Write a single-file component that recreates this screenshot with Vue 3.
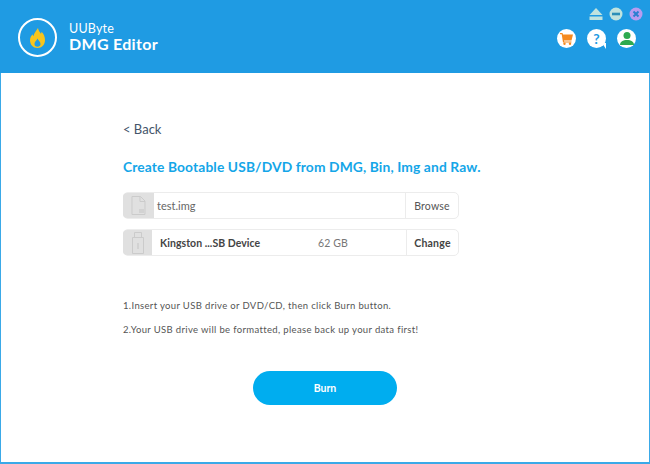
<script setup>
const tips = [
  "1.Insert your USB drive or DVD/CD, then click Burn button.",
  "2.Your USB drive will be formatted, please back up your data first!",
];
</script>

<template>
  <div class="app">
    <header class="header">
      <div class="brand">
        <div class="logo">
          <svg width="15" height="20" viewBox="0 0 15 20">
            <path
              fill="#f8c51c"
              fill-rule="evenodd"
              d="M8 0c.4 2.800 1.800 4.200 3 5.700.3-.6.5-1.200.5-1.900C13.800 6 15 9 15 12.300 15 16.800 11.800 20 7.500 20S0 16.800 0 12.300C0 9.500 1.300 7.800 2.600 6.200c.1.800.4 1.400.8 2C4 5 6.300 3 8 0zM7.500 10.500c-.5 1.600-3 3.100-3 5.500 0 1.700 1.300 2.800 3 2.800s3-1.100 3-2.800c0-2.400-2.500-3.900-3-5.500z"
            />
          </svg>
        </div>
        <div class="brand-text">
          <div class="brand-small">UUByte</div>
          <div class="brand-big">DMG Editor</div>
        </div>
      </div>
      <div class="controls">
        <div class="win-row">
          <svg width="14" height="14" viewBox="0 0 14 14">
            <path fill="#bfe3df" d="M7 1l6.500 7H.5z" />
            <rect x="0.500" y="9.500" width="13" height="3.500" fill="#bfe3df" />
          </svg>
          <svg width="14" height="14" viewBox="0 0 14 14">
            <circle cx="7" cy="7" r="6.500" fill="#bfe3df" />
            <rect x="3" y="5.700" width="8" height="2.600" fill="#2a8fb8" />
          </svg>
          <svg width="14" height="14" viewBox="0 0 14 14">
            <circle cx="7" cy="7" r="6.500" fill="#b79cf0" />
            <path d="M4.500 4.500l5 5M9.500 4.500l-5 5" stroke="#2a7fd0" stroke-width="2" />
          </svg>
        </div>
        <div class="tool-row">
          <div class="tool">
            <svg width="13" height="12" viewBox="0 0 13 12">
              <path fill="#f58a1f" d="M0 0h2.500l.5 1.500h10L11.500 7.500H4l.2 1H11.500v1H3L1.700 1.200H0z" />
              <circle cx="4.500" cy="10.800" r="1.200" fill="#f58a1f" />
              <circle cx="10" cy="10.800" r="1.200" fill="#f58a1f" />
            </svg>
          </div>
          <div class="tool help">
            <span class="q">?</span>
            <i class="tail"></i>
          </div>
          <div class="tool">
            <svg width="14" height="13" viewBox="0 0 14 13">
              <circle cx="7" cy="3.500" r="3.500" fill="#2eaa4f" />
              <path fill="#2eaa4f" d="M0 13c0-3.500 3-5 7-5s7 1.500 7 5z" />
            </svg>
          </div>
        </div>
      </div>
    </header>

    <main class="main">
      <div class="back">&lt; Back</div>
      <h1 class="title">Create Bootable USB/DVD from DMG, Bin, Img and Raw.</h1>

      <div class="field first">
        <div class="thumb wide">
          <svg width="15" height="19" viewBox="0 0 15 19">
            <path fill="none" stroke="#cbcbcb" d="M1 .5h8.500L14 5v13.500H1z" />
            <path fill="none" stroke="#cbcbcb" d="M9 .5V5.500h5" />
            <path d="M8 14h5M8 16h5" stroke="#c4c4c4" />
          </svg>
        </div>
        <div class="file-name">test.img</div>
        <div class="action">Browse</div>
      </div>

      <div class="field">
        <div class="thumb">
          <svg width="12" height="22" viewBox="0 0 12 22">
            <path fill="none" stroke="#cbcbcb" d="M2.500 .5h7v5h-7zM.5 5.500h11v16H.5z" />
            <path d="M6 11v6" stroke="#c4c4c4" />
          </svg>
        </div>
        <div class="device-name">Kingston ...SB Device</div>
        <div class="device-size">62 GB</div>
        <div class="action strong">Change</div>
      </div>

      <div class="tips">
        <p v-for="tip in tips" :key="tip">{{ tip }}</p>
      </div>

      <button class="burn">Burn</button>
    </main>
  </div>
</template>

<style scoped>
* {
  box-sizing: border-box;
}

.app {
  width: 650px;
  height: 464px;
  overflow: hidden;
  background: #fff;
  font-family: Lato, "Open Sans", sans-serif;
  display: flex;
  flex-direction: column;
}

.header {
  height: 73px;
  background: #1f9be3;
  display: flex;
  justify-content: space-between;
  padding: 7px 7px 0 18px;
  flex-shrink: 0;
}

.brand {
  display: flex;
  align-items: flex-start;
  padding-top: 11px;
  gap: 12px;
}

.logo {
  width: 39px;
  height: 39px;
  border: 2.500px solid #fff;
  border-radius: 50%;
  display: flex;
  align-items: center;
  justify-content: center;
}

.brand-text {
  color: #fff;
  padding-top: 4px;
}

.brand-small {
  font-size: 12.500px;
  line-height: 14px;
  letter-spacing: 0.2px;
}

.brand-big {
  font-size: 16px;
  line-height: 16px;
  font-weight: 700;
  letter-spacing: 0.3px;
}

.controls {
  display: flex;
  flex-direction: column;
  align-items: flex-end;
  gap: 8px;
}

.win-row {
  display: flex;
  align-items: center;
  gap: 6px;
}

.tool-row {
  display: flex;
  gap: 11px;
  margin-right: 7px;
}

.tool {
  width: 19px;
  height: 19px;
  border-radius: 50%;
  background: #fff;
  display: flex;
  align-items: center;
  justify-content: center;
  position: relative;
}

.q {
  color: #1f9be3;
  font-weight: 700;
  font-size: 14px;
  line-height: 1;
}

.tail {
  position: absolute;
  right: -1px;
  bottom: 0;
  border-left: 6px solid #fff;
  border-bottom: 4px solid transparent;
  transform: rotate(90deg);
}

.main {
  flex: 1;
  padding: 48px 0 0 122px;
  display: flex;
  flex-direction: column;
  align-items: flex-start;
  border: 1px solid #3aa9e8;
  border-top: 0;
  border-bottom-width: 2px;
}

.back {
  font-size: 13px;
  line-height: 16px;
  color: #44546a;
}

.title {
  margin: 21px 0 0;
  font-size: 13.800px;
  line-height: 18px;
  font-weight: 700;
  color: #14a6e8;
  letter-spacing: 0.12px;
  white-space: nowrap;
}

.field {
  width: 336px;
  height: 27px;
  margin-top: 10px;
  border: 1px solid #ececec;
  border-radius: 5px;
  display: flex;
  align-items: center;
  font-size: 10.500px;
  color: #555;
}

.field.first {
  margin-top: 16px;
}

.thumb {
  width: 29px;
  height: 100%;
  flex-shrink: 0;
  background: #e0e0e0;
  border-radius: 4px 0 0 4px;
  display: flex;
  align-items: center;
  justify-content: center;
  margin-left: -1px;
}

.thumb.wide {
  width: 31px;
}

.file-name {
  flex: 1;
  padding-left: 3px;
  font-size: 11px;
  color: #666;
}

.device-name {
  padding-left: 8px;
  width: 166px;
  font-weight: 700;
  font-size: 10.500px;
  letter-spacing: 0.05px;
  color: #444;
}

.device-size {
  flex: 1;
  color: #777;
  font-size: 10.500px;
  letter-spacing: 0.1px;
}

.action {
  width: 53px;
  height: 100%;
  border-left: 1px solid #ececec;
  display: flex;
  align-items: center;
  justify-content: center;
  font-size: 10.500px;
  letter-spacing: 0.2px;
  color: #555;
}

.action.strong {
  width: 52px;
  font-weight: 700;
  color: #444;
}

.tips {
  margin-top: 44px;
  font-size: 9.500px;
  color: #555;
  letter-spacing: 0.35px;
}

.tips p {
  margin: 0 0 12px;
  line-height: 12px;
}

.burn {
  align-self: flex-start;
  margin: 23px 0 0 130px;
  width: 144px;
  height: 34px;
  border: 0;
  border-radius: 17px;
  background: #00adef;
  color: #fff;
  font-family: inherit;
  font-size: 10.500px;
  font-weight: 700;
}
</style>
